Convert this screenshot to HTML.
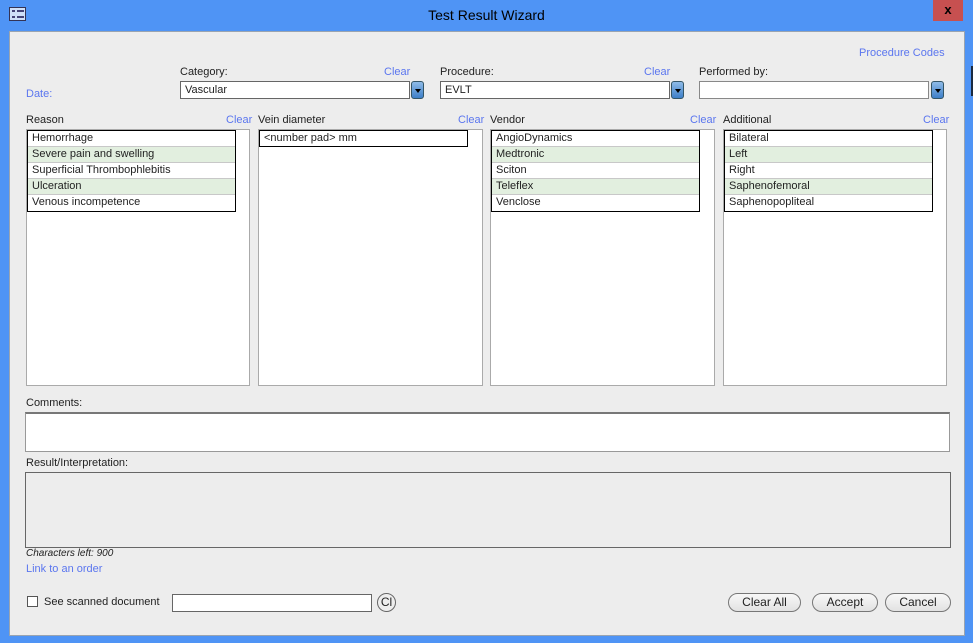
<!DOCTYPE html>
<html><head><meta charset="utf-8"><style>
*{box-sizing:border-box;margin:0;padding:0}
body{width:973px;height:643px;overflow:hidden;background:#4f94f5;font-family:"Liberation Sans",sans-serif;font-size:11px;color:#222;position:relative}
.a{position:absolute;white-space:nowrap}
.blue{color:#5b76ef}
.client{position:absolute;left:9px;top:31px;width:956px;height:605px;background:#ededed;border:1px solid #9aa4b0}
.box{position:absolute;background:#fff;border:1px solid #aaa}
.list{position:absolute;background:#fff;border:1px solid #000}
.row{height:16px;line-height:15px;padding-left:4px;border-bottom:1px solid #c8c8c8;font-size:11px}
.row:last-child{border-bottom:none}
.g{background:#e2efdf}
.dd{position:absolute;width:13px;height:18px;border-radius:3px;background:linear-gradient(#8fbbe8,#3d7fc8);border:1px solid #356;}
.dd:after{content:"";position:absolute;left:3px;top:7px;border-left:3px solid transparent;border-right:3px solid transparent;border-top:4px solid #000}
.btn{position:absolute;height:19px;border:1px solid #777;border-radius:10px;background:linear-gradient(#f8f8f8,#e2e2e2);text-align:center;line-height:17px;font-size:12px}
</style></head><body>
<div class="a" style="left:9px;top:7px;width:17px;height:14px;border:1px solid #335;background:#cfe0f8"></div>
<div class="a" style="left:12px;top:10px;width:3px;height:8px;border-top:2px solid #447;border-bottom:2px solid #447"></div>
<div class="a" style="left:17px;top:10px;width:7px;height:8px;border-top:2px solid #447;border-bottom:2px solid #447"></div>
<div class="a" style="left:0;top:7px;width:973px;text-align:center;font-size:14px;color:#000">Test Result Wizard</div>
<div class="a" style="left:933px;top:0;width:30px;height:21px;background:#c75050;color:#000;font-weight:bold;text-align:center;line-height:20px;font-size:13px">x</div>
<div class="a" style="left:966px;top:0;width:7px;height:643px;background:#4f94f5"></div>
<div class="a" style="left:971px;top:66px;width:2px;height:30px;background:#1a2a40"></div>
<div class="client"></div>

<div class="a blue" style="left:859px;top:47px">Procedure Codes</div>
<div class="a blue" style="left:26px;top:88px">Date:</div>
<div class="a" style="left:180px;top:66px">Category:</div>
<div class="a blue" style="left:384px;top:66px">Clear</div>
<div class="box" style="left:180px;top:81px;width:230px;height:18px;border-color:#666;padding-left:4px;line-height:16px">Vascular</div>
<div class="dd" style="left:411px;top:81px"></div>
<div class="a" style="left:440px;top:66px">Procedure:</div>
<div class="a blue" style="left:644px;top:66px">Clear</div>
<div class="box" style="left:440px;top:81px;width:230px;height:18px;border-color:#666;padding-left:4px;line-height:16px">EVLT</div>
<div class="dd" style="left:671px;top:81px"></div>
<div class="a" style="left:699px;top:66px">Performed by:</div>
<div class="box" style="left:699px;top:81px;width:230px;height:18px;border-color:#888"></div>
<div class="dd" style="left:931px;top:81px"></div>

<div class="a" style="left:26px;top:114px">Reason</div>
<div class="a blue" style="left:226px;top:114px">Clear</div>
<div class="a" style="left:258px;top:114px">Vein diameter</div>
<div class="a blue" style="left:458px;top:114px">Clear</div>
<div class="a" style="left:490px;top:114px">Vendor</div>
<div class="a blue" style="left:690px;top:114px">Clear</div>
<div class="a" style="left:723px;top:114px">Additional</div>
<div class="a blue" style="left:923px;top:114px">Clear</div>

<div class="box" style="left:26px;top:129px;width:224px;height:257px"></div>
<div class="box" style="left:258px;top:129px;width:225px;height:257px"></div>
<div class="box" style="left:490px;top:129px;width:225px;height:257px"></div>
<div class="box" style="left:723px;top:129px;width:224px;height:257px"></div>

<div class="list" style="left:27px;top:130px;width:209px;height:82px">
<div class="row">Hemorrhage</div><div class="row g">Severe pain and swelling</div><div class="row">Superficial Thrombophlebitis</div><div class="row g">Ulceration</div><div class="row">Venous incompetence</div></div>
<div class="list" style="left:259px;top:130px;width:209px;height:17px">
<div class="row">&lt;number pad&gt; mm</div></div>
<div class="list" style="left:491px;top:130px;width:209px;height:82px">
<div class="row">AngioDynamics</div><div class="row g">Medtronic</div><div class="row">Sciton</div><div class="row g">Teleflex</div><div class="row">Venclose</div></div>
<div class="list" style="left:724px;top:130px;width:209px;height:82px">
<div class="row">Bilateral</div><div class="row g">Left</div><div class="row">Right</div><div class="row g">Saphenofemoral</div><div class="row">Saphenopopliteal</div></div>

<div class="a" style="left:26px;top:397px">Comments:</div>
<div class="box" style="left:25px;top:412px;width:925px;height:40px;border:1px solid #999;border-top:2px solid #777"></div>
<div class="a" style="left:26px;top:457px">Result/Interpretation:</div>
<div class="a" style="left:25px;top:472px;width:926px;height:76px;background:#ededed;border:1px solid #666"></div>
<div class="a" style="left:26px;top:548px;font-style:italic;font-size:10px">Characters left: 900</div>
<div class="a blue" style="left:26px;top:563px">Link to an order</div>

<div class="a" style="left:27px;top:596px;width:11px;height:11px;border:1px solid #555;background:#fff"></div>
<div class="a" style="left:44px;top:596px">See scanned document</div>
<div class="box" style="left:172px;top:594px;width:200px;height:18px;border-color:#666"></div>
<div class="a" style="left:377px;top:593px;width:19px;height:19px;border:1px solid #666;border-radius:50%;background:#eee;text-align:center;line-height:17px;font-size:12px">Cl</div>
<div class="btn" style="left:728px;top:593px;width:73px">Clear All</div>
<div class="btn" style="left:812px;top:593px;width:66px">Accept</div>
<div class="btn" style="left:885px;top:593px;width:66px">Cancel</div>
</body></html>
